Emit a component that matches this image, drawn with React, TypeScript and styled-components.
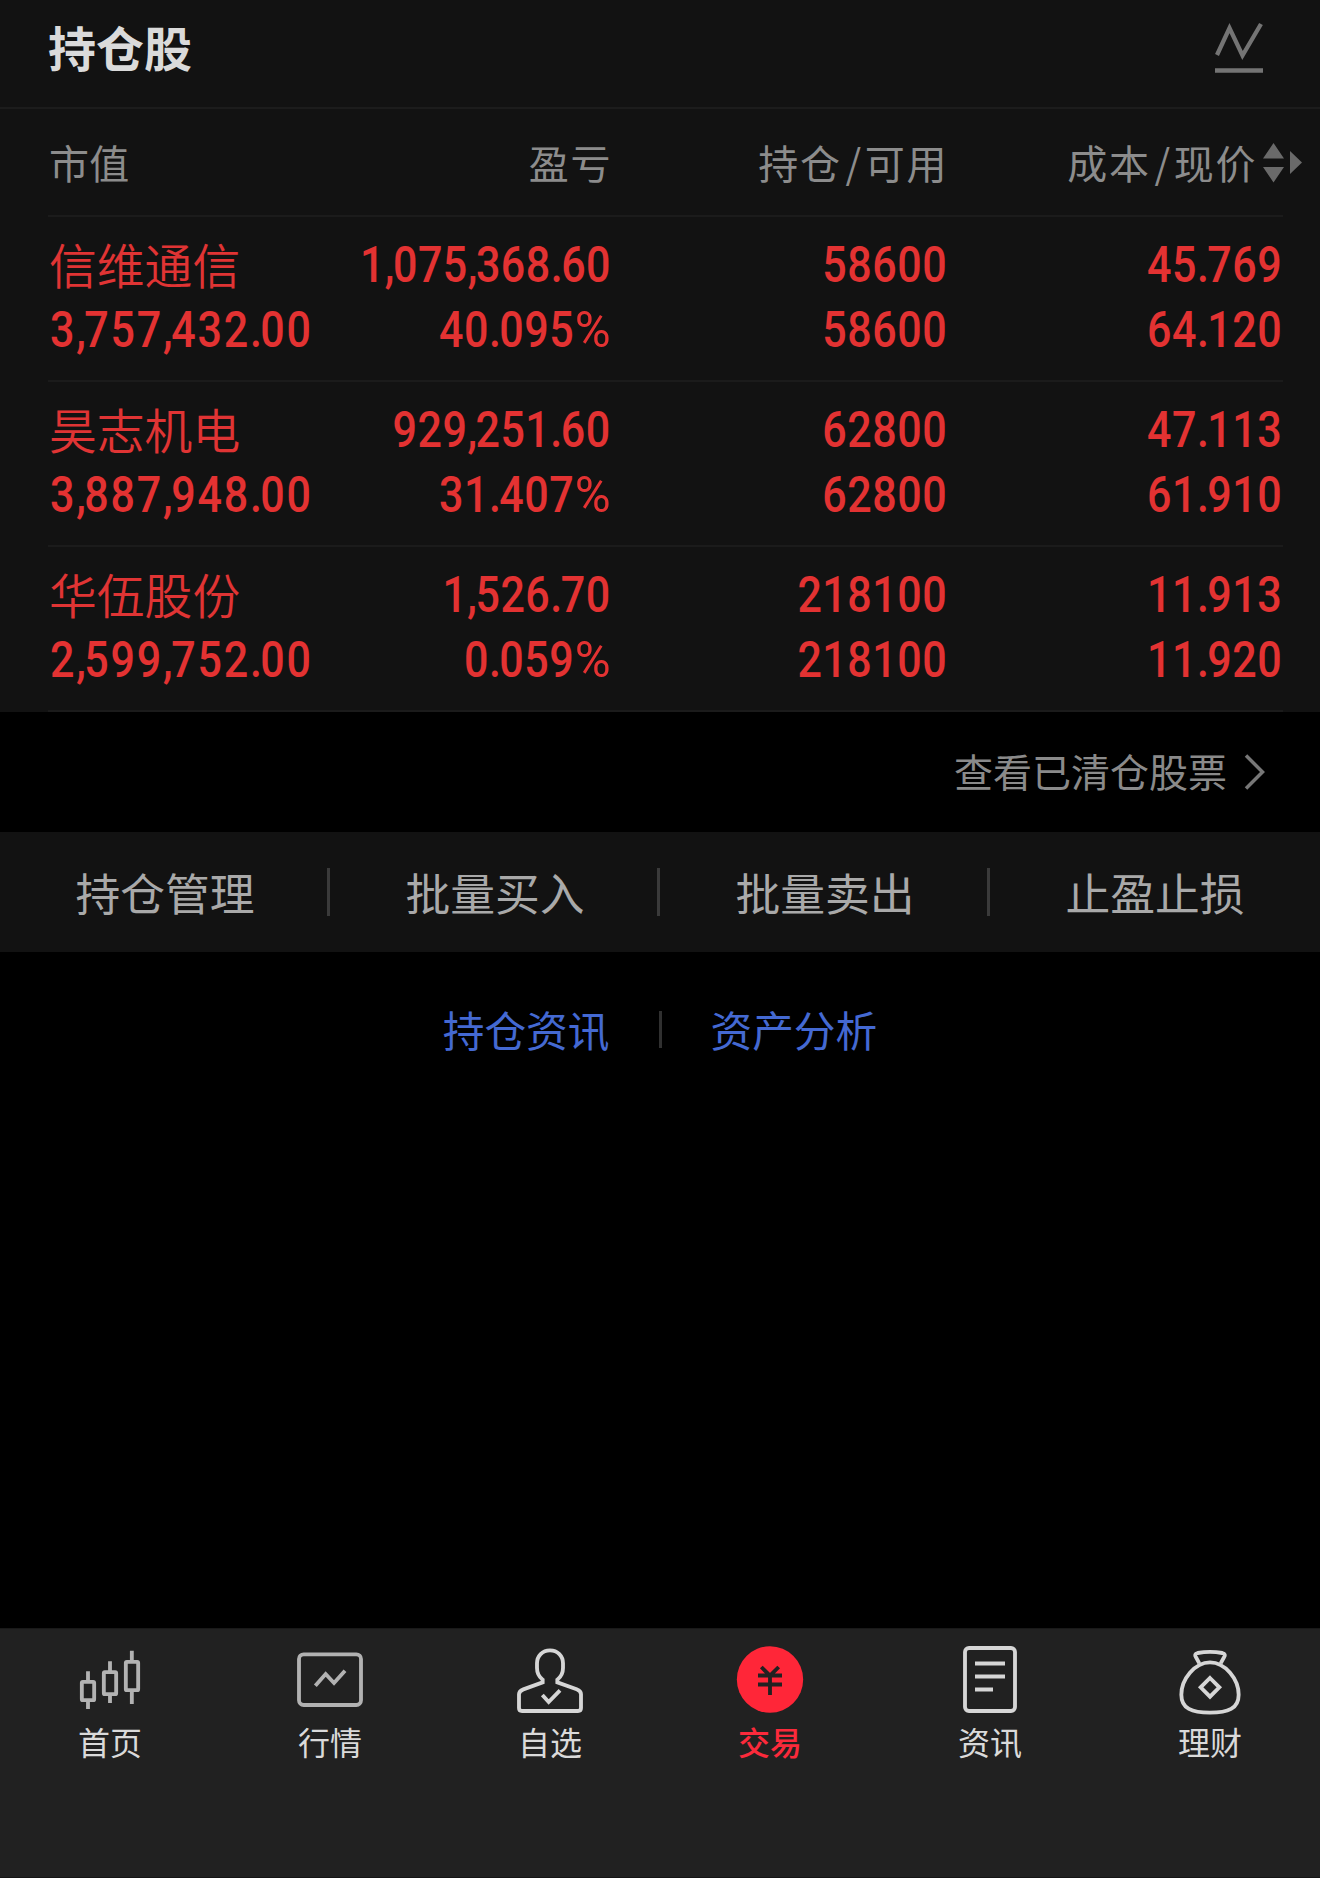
import React from "react";
import styled, { createGlobalStyle } from "styled-components";

const GlobalStyle = createGlobalStyle`
  * { box-sizing: border-box; }
  html, body { margin: 0; background: #000; }
  body { font-family: "Noto Sans CJK SC", sans-serif; }
`;

const Page = styled.div`
  width: 1320px;
  height: 1878px;
  display: flex;
  flex-direction: column;
  background: #000;
  overflow: hidden;
  white-space: nowrap;
`;

const Panel = styled.section`
  height: 712px;
  background: #121212;
`;

const TitleBar = styled.header`
  height: 109px;
  padding: 0 57px 12px 48px;
  display: flex;
  align-items: center;
  justify-content: space-between;
  border-bottom: 2px solid #1c1c1c;
`;

const Title = styled.h1`
  margin: 0;
  padding-bottom: 4px;
  font-size: 48px;
  line-height: 60px;
  font-weight: 700;
  color: #dadada;
`;

const Table = styled.div`
  margin-left: 48px;
  width: 1235px;
`;

const Row = styled.div`
  height: 165px;
  padding-top: 16px;
  display: grid;
  grid-template-columns: 300px 263px 336px 335px;
  grid-template-rows: 65px 65px;
  border-bottom: 2px solid #1b1b1b;
`;

const HeadRow = styled.div`
  height: 108px;
  width: 1256px;
  padding: 0 0 3px 1px;
  display: grid;
  grid-template-columns: 300px 263px 336px 355px;
  align-items: center;
`;

const HeadRule = styled.div`
  height: 2px;
  margin-top: -2px;
  background: #1b1b1b;
`;

const HeadCell = styled.div<{ $align?: string; $spacing?: number }>`
  display: flex;
  align-items: center;
  justify-content: ${(p) => p.$align ?? "flex-end"};
  font-size: 40px;
  line-height: 56px;
  letter-spacing: ${(p) => p.$spacing ?? 1.6}px;
  color: #8c8c8c;
`;

const Slash = styled.span`
  margin: 0 2px 0 4px;
`;

const SortIcon = styled.svg`
  margin: 3px 0 0 6px;
  flex: none;
`;

const Name = styled.div`
  padding-left: 1px;
  margin-top: -1px;
  font-size: 47.8px;
  line-height: 64px;
  font-weight: 350;
  color: #e03434;
`;

const Cell = styled.div<{ $align?: string }>`
  padding-left: 2px;
  display: flex;
  justify-content: ${(p) => p.$align ?? "flex-end"};
`;

const Num = styled.span<{ $left?: boolean }>`
  flex: none;
  font-family: Roboto, "Noto Sans CJK SC", sans-serif;
  font-weight: 500;
  font-size: 50px;
  line-height: 65px;
  letter-spacing: ${(p) => (p.$left ? 2.1 : 0.6)}px;
  color: #e33232;
  transform: scaleX(0.86);
  transform-origin: ${(p) => (p.$left ? "left" : "right")} center;
`;

const Mark = styled.span`
  letter-spacing: -1.8px;
`;

const Percent = styled.span`
  display: inline-block;
  margin-left: 6px;
  font-weight: 400;
  letter-spacing: 0;
  transform: scaleX(1.14);
  transform-origin: right center;
`;

const ClearedLink = styled.div`
  height: 120px;
  padding: 0 55px 0 0;
  display: flex;
  align-items: center;
  justify-content: flex-end;
  gap: 17px;
  font-size: 39px;
  color: #8a8a8a;
`;

const ClearedText = styled.span`
  line-height: 56px;
  padding-bottom: 4px;
`;

const Actions = styled.nav`
  height: 120px;
  display: grid;
  grid-template-columns: repeat(4, 330px);
  align-items: center;
  background: #121212;
`;

const Action = styled.div`
  height: 48px;
  padding: 0 0 2px 3px;
  display: flex;
  align-items: center;
  justify-content: center;
  font-size: 44.8px;
  color: #a9a9a9;
  border-right: 3px solid #3a3a3a;
  &:last-child { border-right-color: transparent; }
`;

const Links = styled.div`
  flex: 1;
  padding-top: 59px;
  display: flex;
  justify-content: center;
  gap: 49px;
`;

const BlueLink = styled.a`
  height: 37px;
  line-height: 37px;
  font-size: 41.7px;
  color: #4469d2;
`;

const LinkRule = styled.i`
  width: 3px;
  height: 37px;
  background: #303030;
`;

const TabBar = styled.footer`
  height: 250px;
  padding-top: 17px;
  display: grid;
  grid-template-columns: repeat(6, 220px);
  align-items: start;
  background: #212121;
  border-top: 1px solid #191919;
  border-bottom: 1px solid #151515;
`;

const Tab = styled.div<{ $active?: boolean }>`
  display: flex;
  flex-direction: column;
  align-items: center;
  gap: 6px;
  font-size: 32px;
  line-height: 44px;
  font-weight: ${(p) => (p.$active ? 500 : 400)};
  color: ${(p) => (p.$active ? "#fb2a3b" : "#dadada")};
`;

const TabSvg = styled.svg<{ $tone: string }>`
  width: 66px;
  height: 67px;
  overflow: visible;
  fill: none;
  stroke: ${(p) => p.$tone};
  stroke-width: 11.5;
`;

const TabIcon = ({ tone = "#d6d6d6", children }: { tone?: string; children: React.ReactNode }) => (
  <TabSvg $tone={tone} viewBox="0 0 198 201">{children}</TabSvg>
);

const tabs = [
  {
    label: "首页",
    icon: (
      <TabIcon tone="#b2b2b2">
        <rect x="14.5" y="107.5" width="37" height="55" rx="3" />
        <rect x="80.5" y="78.5" width="37" height="66" rx="3" />
        <rect x="146.5" y="47.5" width="37" height="85" rx="3" />
        <path d="M33 76v30M33 165v24M99 46v30M99 146v25M164.500 14v32M164.500 134v40" />
      </TabIcon>
    ),
  },
  {
    label: "行情",
    icon: (
      <TabIcon tone="#b2b2b2">
        <rect x="6" y="25" width="186" height="152" rx="14" />
        <path d="M55 119L86 84l25 27 33-37" />
      </TabIcon>
    ),
  },
  {
    label: "自选",
    icon: (
      <TabIcon>
        <path d="M99 13C76 13 60 30 60 52V66C60 84 68 94 77 101V109L19 130Q6 135 6 145V186Q6 195 15 195H183Q192 195 192 186V145Q192 135 179 130L121 109V101C130 94 138 84 138 66V52C138 30 122 13 99 13Z" />
        <path d="M76 147l19 21 34-35" />
      </TabIcon>
    ),
  },
  {
    label: "交易",
    active: true,
    icon: (
      <TabIcon tone="#212121">
        <circle cx="99" cy="100.500" r="99.500" fill="#ff2638" stroke="none" />
        <path d="M73 63l26 26 26-26M63 88.500h72M63 115.500h72M99 86v61" />
      </TabIcon>
    ),
  },
  {
    label: "资讯",
    icon: (
      <TabIcon>
        <rect x="24" y="6" width="150" height="189" rx="12" />
        <path d="M54 52.500h90M54 91.500h90M54 130.500h54" />
      </TabIcon>
    ),
  },
  {
    label: "理财",
    icon: (
      <TabIcon>
        <path d="M67 52L57 34Q50 24 62 21Q99 14 136 21Q148 24 141 34L131 52" />
        <path d="M99 49C53 49 13 100 13 146C13 188 45 200 99 200C153 200 185 188 185 146C185 100 145 49 99 49Z" />
        <path d="M99 96l28 28-28 28-28-28Z" />
      </TabIcon>
    ),
  },
];

const holdings = [
  { name: "信维通信", value: "3,757,432.00", profit: "1,075,368.60", rate: "40.095%", held: "58600", free: "58600", cost: "45.769", price: "64.120" },
  { name: "昊志机电", value: "3,887,948.00", profit: "929,251.60", rate: "31.407%", held: "62800", free: "62800", cost: "47.113", price: "61.910" },
  { name: "华伍股份", value: "2,599,752.00", profit: "1,526.70", rate: "0.059%", held: "218100", free: "218100", cost: "11.913", price: "11.920" },
];

const Figure = ({ text, left }: { text: string; left?: boolean }) => (
  <Cell $align={left ? "flex-start" : undefined}>
    <Num $left={left}>
      {text.split(/([.,%])/).map((part, i) => {
        if (part === "%") return <Percent key={i}>{part}</Percent>;
        if (part === "." || part === ",") return <Mark key={i}>{part}</Mark>;
        return part;
      })}
    </Num>
  </Cell>
);

export default function App() {
  return (
    <Page>
      <GlobalStyle />
      <Panel>
        <TitleBar>
          <Title>持仓股</Title>
          <svg width="48" height="52" viewBox="0 0 48 52" fill="none" stroke="#747474">
            <path d="M2 33L14.500 6 27.500 33.500 46 2" strokeWidth="4.300" />
            <path d="M0 48.500h48" strokeWidth="4.500" />
          </svg>
        </TitleBar>
        <Table>
          <HeadRow>
            <HeadCell $align="flex-start" $spacing={0.3}>市值</HeadCell>
            <HeadCell>盈亏</HeadCell>
            <HeadCell>持仓<Slash>/</Slash>可用</HeadCell>
            <HeadCell>
              成本<Slash>/</Slash>现价
              <SortIcon width="40" height="40" viewBox="0 0 40 40" fill="#6a6a6a">
                <path d="M10.500 0L21 15.500H0ZM0 24H21L10.500 39.500ZM27 8L39 19.500 27 31Z" />
              </SortIcon>
            </HeadCell>
          </HeadRow>
          <HeadRule />
          {holdings.map((h) => (
            <Row key={h.name}>
              <Name>{h.name}</Name>
              <Figure text={h.profit} />
              <Figure text={h.held} />
              <Figure text={h.cost} />
              <Figure text={h.value} left />
              <Figure text={h.rate} />
              <Figure text={h.free} />
              <Figure text={h.price} />
            </Row>
          ))}
        </Table>
      </Panel>
      <ClearedLink>
        <ClearedText>查看已清仓股票</ClearedText>
        <svg width="21" height="36" viewBox="0 0 21 36" fill="none" stroke="#777" strokeWidth="3.500">
          <path d="M2 1.500L18.500 18 2 34.500" />
        </svg>
      </ClearedLink>
      <Actions>
        {["持仓管理", "批量买入", "批量卖出", "止盈止损"].map((label) => (
          <Action key={label}>{label}</Action>
        ))}
      </Actions>
      <Links>
        <BlueLink>持仓资讯</BlueLink>
        <LinkRule />
        <BlueLink>资产分析</BlueLink>
      </Links>
      <TabBar>
        {tabs.map((tab) => (
          <Tab key={tab.label} $active={tab.active}>
            {tab.icon}
            {tab.label}
          </Tab>
        ))}
      </TabBar>
    </Page>
  );
}
